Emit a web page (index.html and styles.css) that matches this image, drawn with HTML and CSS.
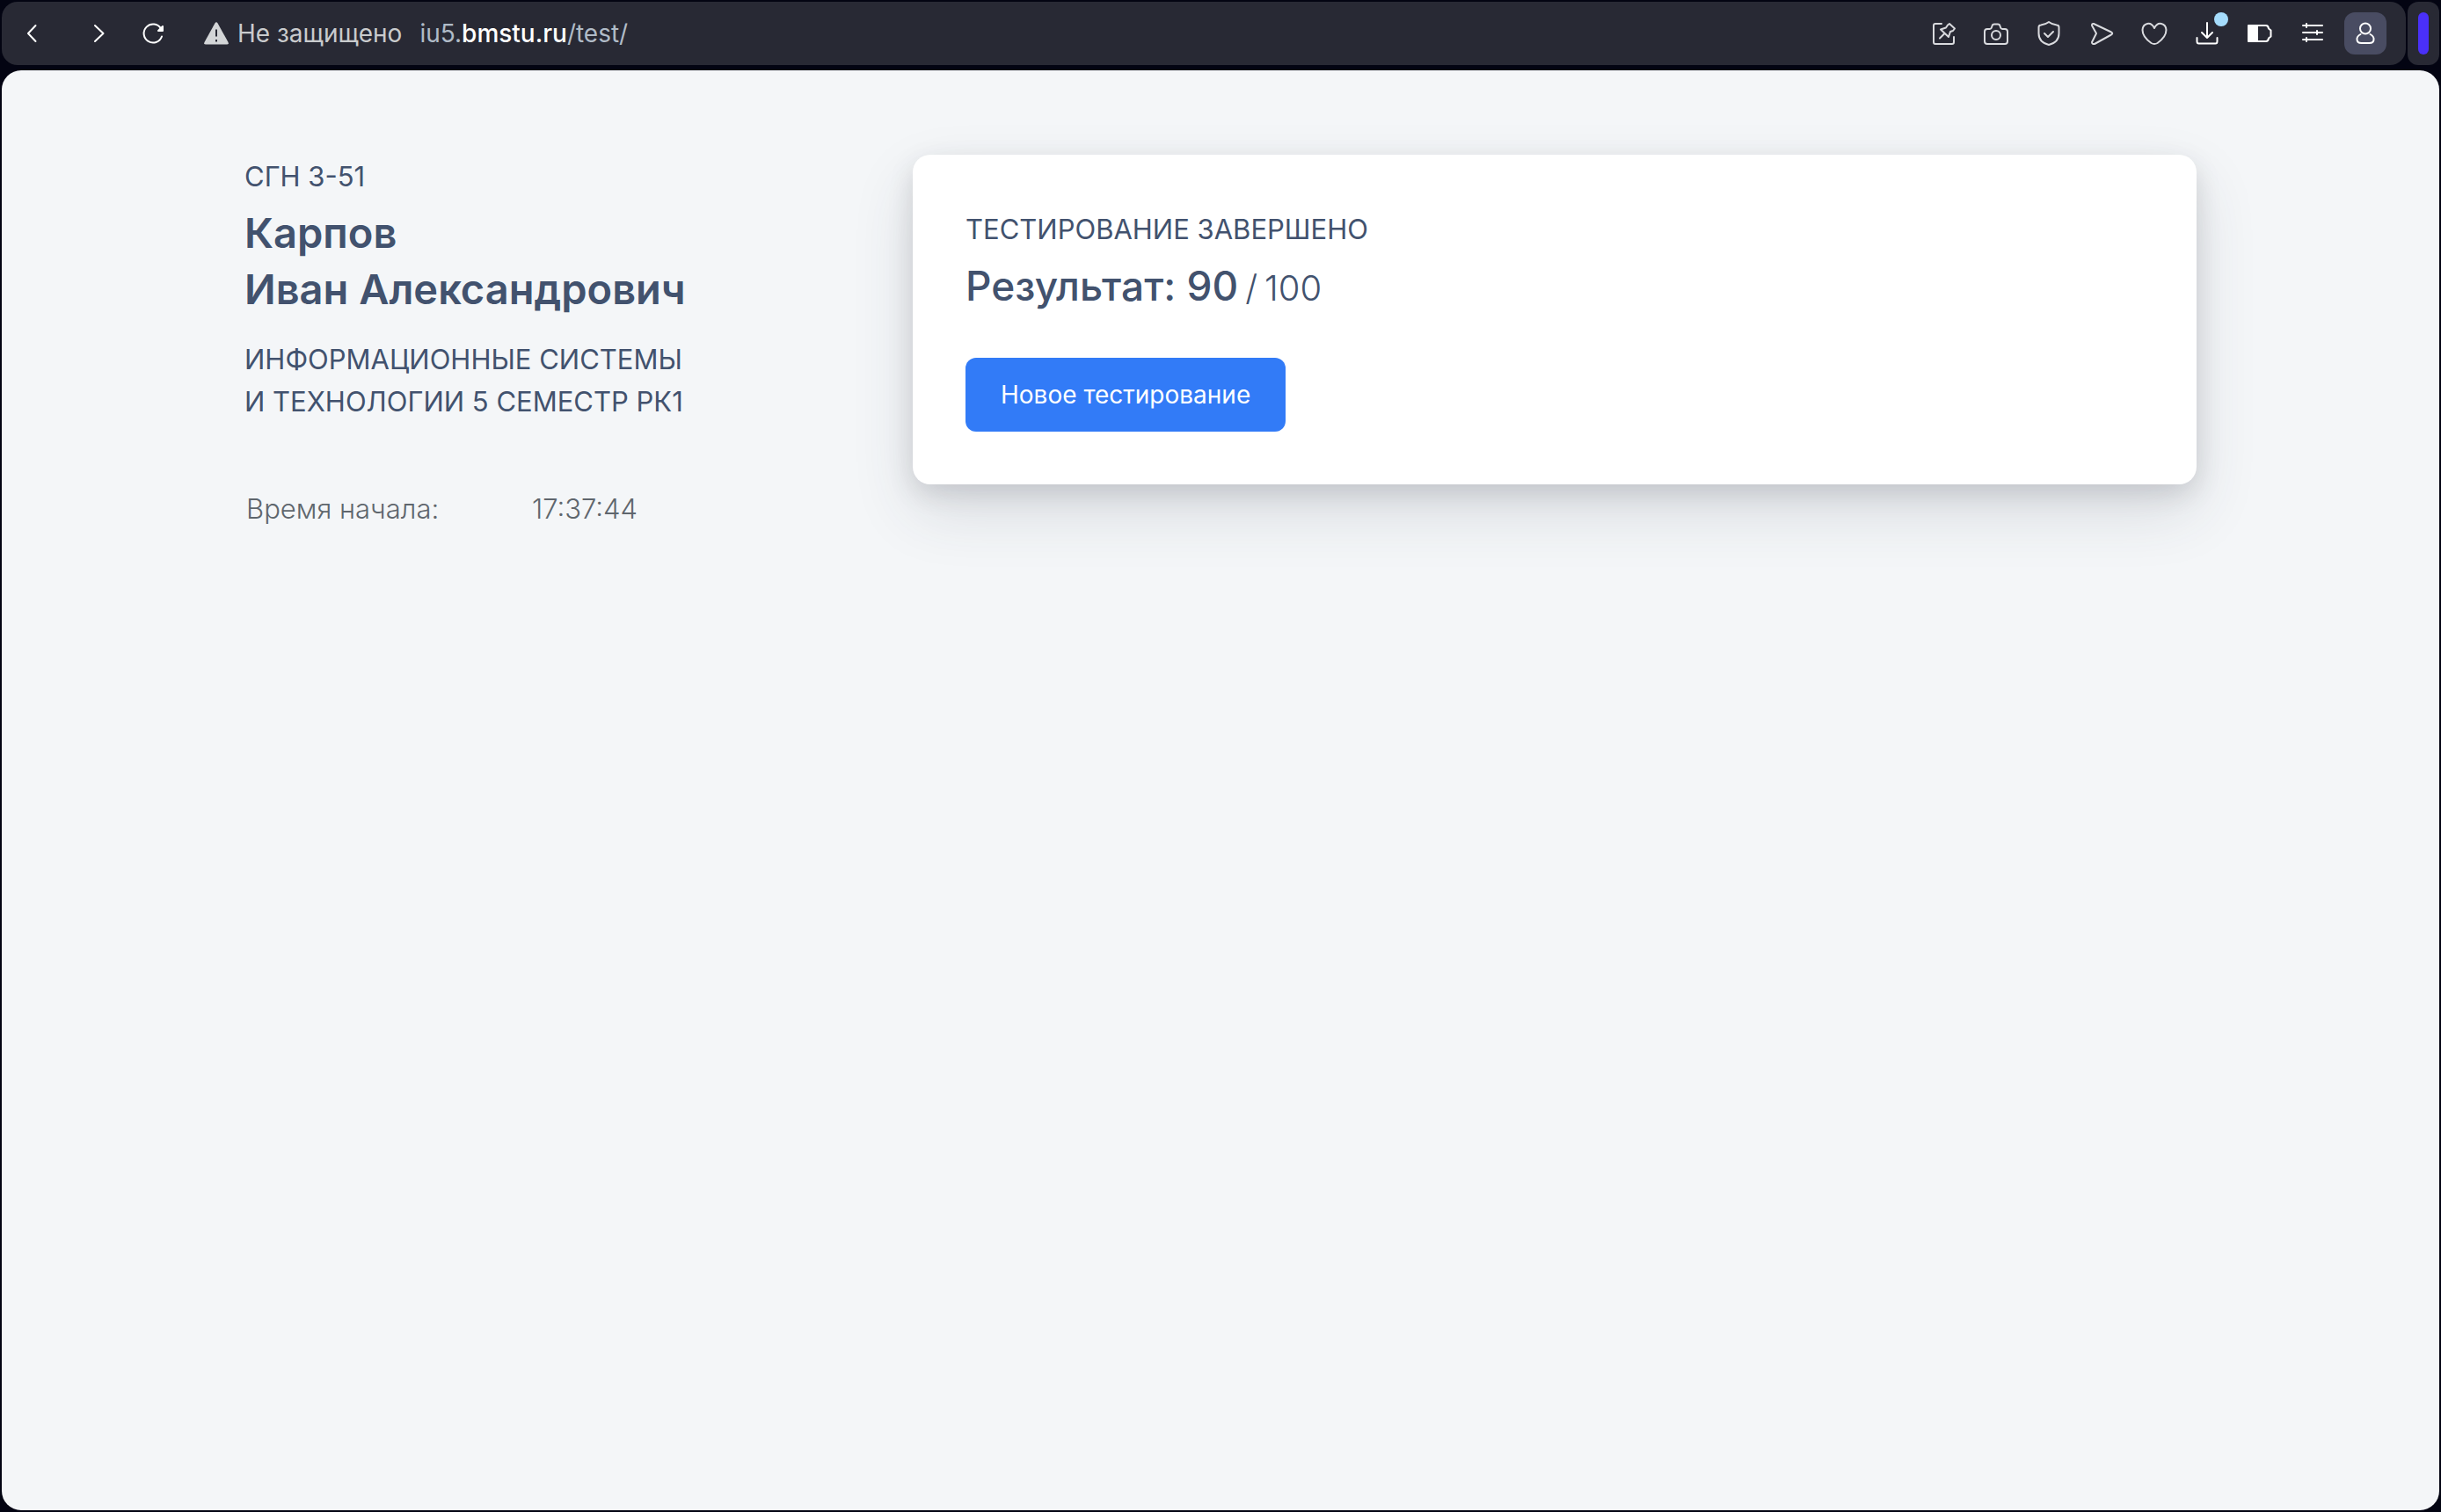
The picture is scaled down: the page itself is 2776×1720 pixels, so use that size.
FILE: index.html
```html
<!DOCTYPE html>
<html lang="ru">
<head>
<meta charset="utf-8">
<title>Тестирование</title>
<link rel="stylesheet" href="styles.css">
</head>
<body>
<header class="chrome">
  <div class="toolbar">
    <nav class="nav-buttons" aria-label="Навигация">
      <button class="tool back" type="button" aria-label="Назад"><svg viewBox="0 0 32 32"><path d="M20.500 7 12 16l8.500 9"/></svg></button>
      <button class="tool" type="button" aria-label="Вперёд"><svg viewBox="0 0 32 32"><path d="m12 7 9.500 9-9.500 9"/></svg></button>
      <button class="tool" type="button" aria-label="Обновить"><svg viewBox="0 0 32 32"><path d="M26 19.500A10.500 10.500 0 1 1 25 10.500"/><path class="solid" d="M27 8v5h-5z"/></svg></button>
    </nav>
    <div class="address">
      <svg class="warning" viewBox="0 0 28 26"><path class="warning-shape" d="M12.400 1.500q1.600-2.500 3.200 0L27.500 23q1 2.500-1.500 2.500H2Q-.5 25.500.5 23z"/><path class="warning-mark" d="M14 8.500v8M14 20v2.500"/></svg>
      <span class="insecure">Не защищено</span>
      <span class="url">iu5.<b>bmstu.ru</b>/test/</span>
    </div>
    <div class="actions">
      <button class="tool dim" type="button" aria-label="Закрепить"><svg viewBox="0 0 32 32"><path d="M14 5H7Q5 5 5 7v19q0 2 2 2h19q2 0 2-2v-6"/><path d="m21 6.500 2-1.500 6 5.500-2 2.500-3 1-2 6-9-8.500 6-2zM17 16.500 12 21.500"/></svg></button>
      <button class="tool dim" type="button" aria-label="Снимок"><svg viewBox="0 0 32 32"><path d="M6 11h3q1.500 0 2-2l.5-1.500q.5-2 2.500-2h4q2 0 2.500 2L21 9q.5 2 2 2h3q3 0 3 3v11q0 3-3 3H6q-3 0-3-3V14q0-3 3-3z"/><circle cx="16" cy="18" r="5"/></svg></button>
      <button class="tool dim" type="button" aria-label="Защита"><svg viewBox="0 0 32 32"><path d="M16 3q4 3 9 3.500 2.500 0 2.500 2.500v7q0 10-11.500 13Q4.500 26 4.500 16V9q0-2.500 2.500-2.500Q12 6 16 3z"/><path d="m11 16 4 4 6-6"/></svg></button>
      <button class="tool dim" type="button" aria-label="Отправить"><svg viewBox="0 0 32 32"><path d="m7 5 20 9.500q2.500 1.500 0 3L8 28q-3 .5-3-2l5-10L5 7q0-2.500 2-2z"/></svg></button>
      <button class="tool dim" type="button" aria-label="Избранное"><svg viewBox="0 0 32 32"><path d="M16 10q3-6 8-5 5 1 5.500 7 0 8-10 15-3.500 2-7 0-10-7-10-15Q3 6 8 5q5-1 8 5z"/></svg></button>
      <button class="tool" type="button" aria-label="Загрузки"><svg viewBox="0 0 32 32"><path d="M16 4v17m-6-6 6 6 6-6M4.500 21v4q0 2.500 2 2.500h19q2 0 2-2.500v-4"/></svg><i class="badge"></i></button>
      <button class="tool" type="button" aria-label="Батарея"><svg viewBox="0 0 32 32"><path d="M5 7h18q2.500 0 3 3.500l2.500 2v7l-2.500 2q-.5 3.500-3 3.500H5q-2 0-2-2V9q0-2 2-2z"/><path class="solid" d="M3 7h10v18H3z"/></svg></button>
      <button class="tool" type="button" aria-label="Настройки"><svg viewBox="0 0 32 32"><path d="M5 7h22M5 15h22M5 23h22M9 5v4M21 13v4M9 21v4"/></svg></button>
      <button class="tool profile" type="button" aria-label="Профиль"><svg viewBox="0 0 32 32"><circle cx="16" cy="10.500" r="6"/><path d="M10.500 17Q6 19.500 6.500 23q0 4 5 4h9q5 0 5-4 .5-3.500-4-6"/></svg></button>
    </div>
  </div>
  <div class="side-tab"><i class="side-mark"></i></div>
</header>
<main class="page">
  <div class="container">
    <aside class="student">
      <p class="caption">СГН 3-51</p>
      <h1 class="name">Карпов<br>Иван Александрович</h1>
      <p class="caption">ИНФОРМАЦИОННЫЕ СИСТЕМЫ<br>И ТЕХНОЛОГИИ 5 СЕМЕСТР РК1</p>
      <dl class="times"><dt>Время начала:</dt><dd>17:37:44</dd></dl>
    </aside>
    <section class="card">
      <p class="caption">ТЕСТИРОВАНИЕ ЗАВЕРШЕНО</p>
      <h2 class="result"><span>Результат: 90</span><small class="total">/</small><small class="total">100</small></h2>
      <button class="primary" type="button">Новое тестирование</button>
    </section>
  </div>
</main>
</body>
</html>
```
FILE: styles.css
```css
* { box-sizing: border-box; }
body {
  margin: 0;
  min-height: 100vh;
  padding: 2px;
  display: flex;
  flex-direction: column;
  gap: 6px;
  background: #030412;
  font-family: Inter, "Liberation Sans", sans-serif;
}
p, h1, h2, dl, dd { margin: 0; }
button { font: inherit; border: 0; padding: 0; background: none; color: inherit; }

.chrome { display: flex; gap: 2px; height: 72px; }
.toolbar {
  flex: 1;
  display: flex;
  align-items: center;
  padding: 0 22px 0 10px;
  border-radius: 18px;
  background: #282934;
  color: #fff;
}
.nav-buttons { display: flex; gap: 14px; }
.tool { position: relative; display: grid; place-items: center; width: 48px; height: 48px; border-radius: 12px; }
.tool svg { width: 32px; height: 32px; fill: none; stroke: currentColor; stroke-width: 2; stroke-linecap: round; stroke-linejoin: round; }
.tool .solid { fill: currentColor; }
.back { margin-right: 14px; }
.dim { color: #d9dade; }
.address { flex: 1; display: flex; align-items: center; margin-left: 34px; font-size: 28px; white-space: nowrap; }
.warning { width: 28px; height: 26px; margin-right: 10px; }
.warning-shape { fill: #d3d5d7; }
.warning-mark { stroke: #282934; stroke-width: 2; }
.insecure { color: #c9cbcd; margin-right: 20px; }
.url { color: #b0bbc7; }
.url b { color: #fff; font-weight: 500; }
.actions { display: flex; gap: 12px; }
.profile { background: #494c62; }
.badge { position: absolute; top: 0; right: 0; width: 16px; height: 16px; border-radius: 50%; background: #a5dcfc; }
.side-tab { width: 36px; display: grid; place-items: center; border-radius: 12px; background: #282934; }
.side-mark { width: 12px; height: 48px; border-radius: 6px; background: #4a30f8; }

.page { flex: 1; border-radius: 22px; background: #f4f6f8; color: #42526e; }
.container { display: grid; grid-template-columns: 1fr 2fr; align-items: start; max-width: 2280px; margin: 0 auto; padding-top: 96px; }
.student { padding: 1px 30px 0; }
.caption { font-size: 31px; line-height: 48px; }
.name { margin: 8px 0 24px; font-size: 47px; line-height: 64px; font-weight: 600; }
.times { display: flex; margin-top: 74px; padding-left: 2px; font-size: 31px; line-height: 48px; font-weight: 300; color: #5f666d; }
.times dt { width: 325px; }
.card {
  margin: 0 30px;
  padding: 61px 60px 60px;
  border-radius: 20px;
  background: #fff;
  box-shadow: 0 30px 70px rgba(50, 55, 80, 0.14), 0 10px 30px rgba(0, 10, 20, 0.12);
}
.result { display: flex; align-items: baseline; gap: 8px; margin: 8px 0 50px; font-size: 46px; line-height: 64px; font-weight: 500; }
.total { font-size: 40px; line-height: 48px; font-weight: 300; }
.primary { display: block; height: 84px; padding: 0 40px; border-radius: 12px; background: #327bf7; color: #fff; font-size: 28px; }
```
